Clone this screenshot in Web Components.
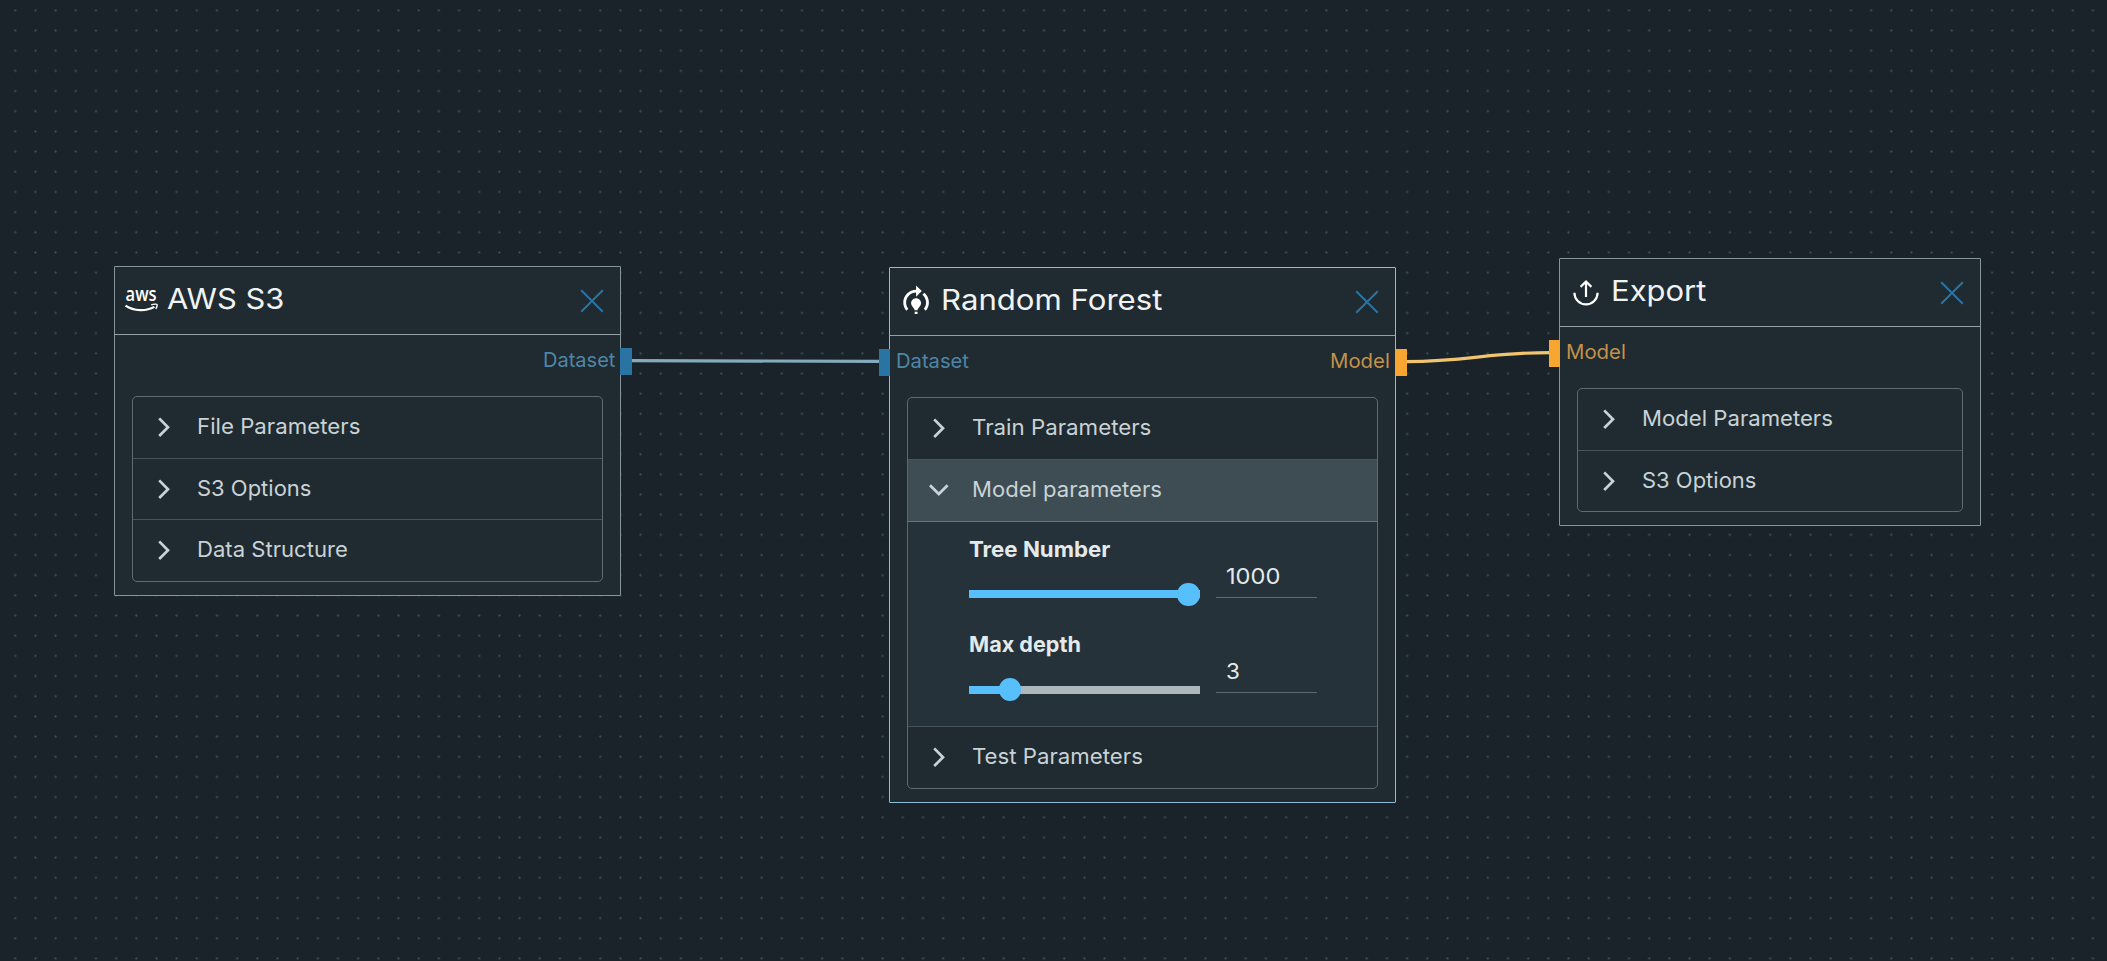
<!DOCTYPE html>
<html lang="en">
<head>
<meta charset="utf-8">
<title>Pipeline editor</title>
<style>
html,body{margin:0;height:100%;background:#1b232a;overflow:hidden}
body{font-family:Inter,"Noto Sans",sans-serif}
</style>
</head>
<body>
<flow-canvas>
  <flow-wires slot="wires"></flow-wires>
  <flow-node style="left:114px;top:266px;width:507px;height:330px">
    <flow-icon slot="icon" name="aws"></flow-icon>
    <fit-text slot="title" w="116">AWS S3</fit-text>
    <flow-port slot="out" side="out" kind="dataset"><fit-text w="71">Dataset</fit-text></flow-port>
    <flow-item first><fit-text slot="label" w="162">File Parameters</fit-text></flow-item>
    <flow-item><fit-text slot="label" w="113">S3 Options</fit-text></flow-item>
    <flow-item last><fit-text slot="label" w="149.5">Data Structure</fit-text></flow-item>
  </flow-node>
  <flow-node selected style="left:889px;top:267px;width:507px;height:536px">
    <flow-icon slot="icon" name="train"></flow-icon>
    <fit-text slot="title" w="220">Random Forest</fit-text>
    <flow-port slot="in" side="in" kind="dataset"><fit-text w="71.5">Dataset</fit-text></flow-port>
    <flow-port slot="out" side="out" kind="model"><fit-text w="58.5">Model</fit-text></flow-port>
    <flow-item first><fit-text slot="label" w="178">Train Parameters</fit-text></flow-item>
    <flow-item open><fit-text slot="label" w="188.5">Model parameters</fit-text>
      <flow-slider value="1000" pos="220" vw="53"><fit-text w="140">Tree Number</fit-text></flow-slider>
      <flow-slider value="3" pos="41.3" vw="12.5"><fit-text w="110.5">Max depth</fit-text></flow-slider>
    </flow-item>
    <flow-item last><fit-text slot="label" w="169.5">Test Parameters</fit-text></flow-item>
  </flow-node>
  <flow-node style="left:1559px;top:258px;width:422px;height:268px">
    <flow-icon slot="icon" name="export"></flow-icon>
    <fit-text slot="title" w="94">Export</fit-text>
    <flow-port slot="in" side="in" kind="model"><fit-text w="58.5">Model</fit-text></flow-port>
    <flow-item first><fit-text slot="label" w="189.5">Model Parameters</fit-text></flow-item>
    <flow-item last><fit-text slot="label" w="113">S3 Options</fit-text></flow-item>
  </flow-node>
</flow-canvas>
<script>
const define = (name, html, init) => customElements.define(name, class extends HTMLElement {
  connectedCallback() {
    if (this.shadowRoot) return;
    this.attachShadow({ mode: 'open' }).innerHTML = typeof html === 'function' ? html(this) : html;
    if (init) init(this);
  }
});

define('flow-canvas', `<style>
:host{display:block;position:relative;width:100%;height:100vh;overflow:hidden;
background:radial-gradient(circle at center,#38565f 0,#2f4951 .8px,transparent 1.5px) 5.2px .3px/20.185px 20.185px #1b232a}
</style><slot name="wires"></slot><slot></slot>`);

define('flow-wires', `<style>
:host{position:absolute;inset:0}svg{display:block;width:100%;height:100%}
path{fill:none;stroke-width:3.2}
</style><svg><path d="M632 360.6L880 361.4" stroke="#84abbd"/>
<path d="M1406 361.6C1470 361.6 1485 352.6 1550 352.6" stroke="#f3c46f"/></svg>`);

define('flow-node', `<style>
:host{position:absolute;box-sizing:border-box;border:1px solid #87959b;border-radius:1px;background:#1f2b30;display:flex;flex-direction:column}
:host([selected]){border-color:#8dbdd8}
header{box-sizing:border-box;flex:none;height:68px;border-bottom:1px solid #93a1a7;display:flex;align-items:center;padding:0 16px 0 9px}
h2{margin:0 auto 0 0;font-size:28.6px;line-height:36px;font-weight:400;color:#f0f3f4;padding-bottom:3px}
.x{width:24px;height:24px;flex:none}
.ports{flex:none;height:61px;box-sizing:border-box;padding-top:13px;display:flex;justify-content:space-between;align-items:flex-start}
.list{margin:0 17px;border:1px solid #5d6b71;border-radius:5px}
</style><header><slot name="icon"></slot><h2><slot name="title"></slot></h2>
<svg class="x" viewBox="0 0 24 24"><path d="M1.2 1.2L22.8 22.8M22.8 1.2L1.2 22.8" stroke="#2a74a4" stroke-width="2"/></svg></header>
<div class="ports"><div><slot name="in"></slot></div><div><slot name="out"></slot></div></div>
<div class="list"><slot></slot></div>`);

define('flow-port', `<style>
:host{display:flex;height:27px;align-items:center;font-size:20px;line-height:25px;color:#4f86a6;--port:#2a74a4}
:host([kind=model]){color:#c49249;--port:#f8a632}
:host([side=in]){margin-left:-11px}
:host([side=out]){margin-right:-12px;flex-direction:row-reverse}
i{width:11px;height:27px;background:var(--port);margin-right:5.5px}
:host([side=out]) i{width:12px;margin:0 0 0 5.5px}
span{padding-bottom:2px}
</style><i></i><span><slot></slot></span>`);

define('flow-item', `<style>
:host{display:block}
.row{box-sizing:border-box;height:61.67px;border-bottom:1px solid #47555b;display:flex;align-items:center;padding-left:20.6px;font-size:21.6px;line-height:28px;color:#c9d2d6}
:host([last]) .row{border-bottom-color:transparent;height:60.7px}
:host([open]) .row{background:#3d4d53;border-bottom-color:#6a787d;height:62.3px}
svg{width:20px;height:20px;flex:none;margin-right:23.6px}
.text{padding-bottom:2px}
:host([open]) svg{transform:rotate(90deg)}
path{fill:none;stroke:#c9d2d6;stroke-width:2.7}
.panel{display:none}
:host([open]) .panel{display:block;box-sizing:border-box;height:205px;border-bottom:1px solid #47555b;background:#253239;padding:13px 0 0 60.5px}
</style><div class="row"><svg viewBox="0 0 20 20"><path d="M5.2 1.4L14 10.2L5.2 19"/></svg><span class="text"><slot name="label"></slot></span></div>
<div class="panel"><slot></slot></div>`);

define('flow-slider', e => `<style>
:host{display:grid;grid-template-columns:231.5px 100.5px;column-gap:16px;height:95.3px;font-size:21.6px;color:#e4eaec}
.label{font-weight:700;line-height:28px;height:55.4px}
.track{height:8px;background:linear-gradient(90deg,#57bffc ${e.getAttribute('pos')}px,#adb8bc 0);display:flex;align-items:center}
.track i{width:22.5px;height:22.5px;border-radius:50%;background:#57bffc;margin-left:${e.getAttribute('pos') - 11.2}px;flex:none}
.value{margin-top:26px;box-sizing:border-box;height:37px;line-height:30px;padding-left:9.5px;border-bottom:1px solid #5d6b71}
</style><div><div class="label"><slot></slot></div><div class="track"><i></i></div></div>
<div class="value"><fit-text w="${e.getAttribute('vw')}">${e.getAttribute('value')}</fit-text></div>`);

const icons = {
  aws: `<svg width="35" height="30" viewBox="0 0 35 30" style="margin-right:7.5px;overflow:visible"><text x="1.6" y="15" font-family="Open Sans,Noto Sans,sans-serif" font-size="19.5" font-weight="600" textLength="31" lengthAdjust="spacingAndGlyphs" fill="#fff">aws</text><path d="M1.5 19.6C10 25.3 22 25.6 30.4 20.9" fill="none" stroke="#fff" stroke-width="2.2"/><path d="M27.2 18.9C29.5 18 33 17.8 33.2 18.8C33.3 20 32.6 21.6 31.8 22.8" fill="none" stroke="#fff" stroke-width="1.4"/></svg>`,
  train: `<svg width="34.2" height="34.2" viewBox="0 0 24 24" style="margin-right:8px"><path fill="#fff" d="M15.5 13.5c0 2-2.5 3.5-2.5 5h-2c0-1.5-2.5-3-2.5-5 0-1.93 1.57-3.5 3.5-3.5s3.5 1.57 3.5 3.5zM13 19.5h-2V21h2v-1.5zM19 13c0 1.68-.59 3.21-1.58 4.42l1.42 1.42C20.18 17.27 21 15.23 21 13c0-2.74-1.23-5.19-3.16-6.84l-1.42 1.42C17.99 8.86 19 10.82 19 13zM16 5l-4-4v3c-4.97 0-9 4.03-9 9 0 2.23.82 4.27 2.16 5.84l1.42-1.42C5.59 16.21 5 14.68 5 13c0-3.86 3.14-7 7-7v3l4-4z"/></svg>`,
  export: `<svg width="34" height="34" viewBox="0 0 34 34" style="margin-right:8px"><path d="M5.4 16.8A11.6 11.6 0 0 0 28.6 16.8M17 21V6.5M11.6 10.9L17 5.5L22.4 10.9" fill="none" stroke="#fff" stroke-width="2.2"/></svg>`
};
define('flow-icon', e => `<style>:host{display:block;flex:none}svg{display:block}</style>${icons[e.getAttribute('name')]}`);

/* Widens its letters so that the text takes w pixels. */
define('fit-text', `<style>:host{display:inline-block;white-space:nowrap;transform-origin:0 50%}</style><slot></slot>`);
const fit = root => root.querySelectorAll('*').forEach(e => {
  if (e.localName === 'fit-text') {
    const w = +e.getAttribute('w') + 1.4, natural = e.getBoundingClientRect().width;
    e.style.transform = `scaleX(${(w / natural).toFixed(4)})`;
    e.style.marginRight = (w - natural - .5).toFixed(2) + 'px';
  }
  if (e.shadowRoot) fit(e.shadowRoot);
});
fit(document);
</script>
</body>
</html>
